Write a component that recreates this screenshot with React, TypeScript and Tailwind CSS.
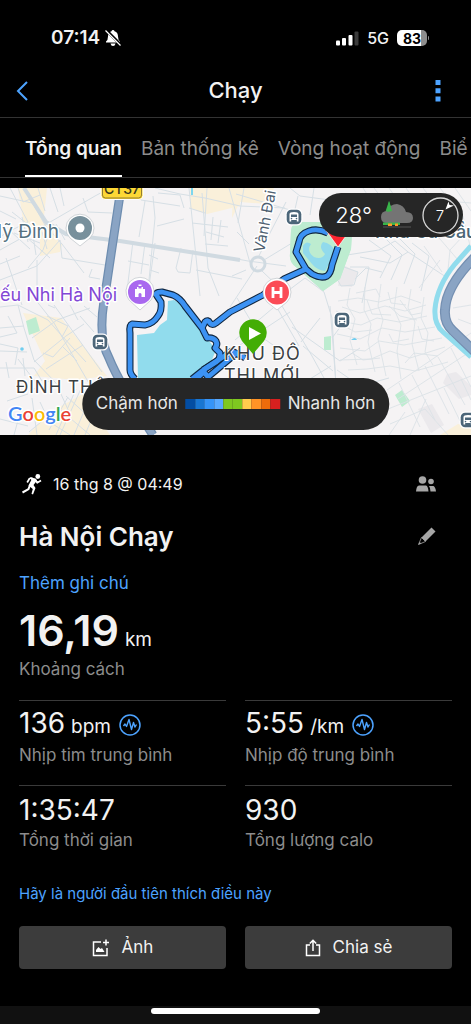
import { clsx } from "clsx";

const tabs = ["Tổng quan", "Bản thống kê", "Vòng hoạt động", "Biể"];

const stats = [
  { value: "136", unit: "bpm", label: "Nhịp tim trung bình", chart: true },
  { value: "5:55", unit: "/km", label: "Nhịp độ trung bình", chart: true },
  { value: "1:35:47", unit: "", label: "Tổng thời gian", chart: false },
  { value: "930", unit: "", label: "Tổng lượng calo", chart: false },
];

const route = [
  "M192 191L202 183L216 174Q220 172 220 165L215 160Q218 157 216 153Q213 149 207 150L202 140L185 118Q180 110 173 107L162 104Q154 104 157 108L161 114Q162 123 158 128Q153 136 145 137L132 136Q129 137 130 145L130 182Q130 186 135 191",
  "M202 140L205 134Q208 131 210 135Q212 138 216 135L230 124L263 107L284 91L306 81",
  "M328 45Q318 40 309 43Q300 46 299 54L296 64L306 81L312 86Q321 91 327 88Q331 85 332 77L338 59",
  "M196 191L204 184L208 189L233 168L238 164M203 182L232 163L245 170",
];

const streets = [
  "M24 0L45 37L62 56L84 85M45 37L95 8L110 0M10 0L28 34L6 45L0 49M45 37L0 62M60 52L37 78L0 92M60 52L62 70L105 77M83 10L88 24L112 25M65 52L56 36M0 8L32 15M12 24L30 38M18 0L23 14L40 7M6 70L17 103L22 117",
  "M38 0L45 23M50 0L58 24M60 0L64 18M0 23L16 31M0 35L10 51M8 41L30 61M22 29L28 54M14 45L40 55M25 48L50 70M37 72L37 100M0 76L20 68M28 80L43 62L50 42M32 41L36 67M42 44L47 61",
  "M139 0L141 12L180 18M153 8L155 30L149 92M158 5L180 7L184 20M133 53L127 103M145 55L141 86M155 55L149 98M128 73L149 77M149 67L158 71M150 82L159 85M157 38L184 31M145 13L139 49M181 60L176 80L178 84L190 85L193 62M92 81L89 89L100 91",
  "M189 0L200 108M202 5L208 80L219 108M189 20L205 25M192 35L228 39M207 0L204 48M205 56L228 58M213 29L211 52M221 32L218 55M206 44L224 49M196 82L242 91M229 0L250 75M155 0L180 6L205 10L240 18L285 20",
  "M236 6L290 22M232 70L248 73L286 78M286 14L270 45L258 70M257 78L230 119M262 83L285 105L305 90L324 104L332 130L336 198M264 72L292 55M244 0L238 35M290 0L300 8L330 12M298 8L293 30M314 0L310 27M237 44L249 56M232 88L246 82",
  "M347 67L379 62L395 53L408 64L446 89M337 91L341 78L358 84L354 97L341 98ZM355 91L366 80L382 84M360 69L390 75L408 64M369 52L391 68L380 90M382 47L402 67L391 92M397 48L415 66L404 96M412 55L429 68L421 103M350 79L369 79L362 115",
  "M0 119L18 117L24 140L34 172L56 195L70 226M18 117L48 132L62 148L86 174M35 111L54 135L90 197M54 117L74 145L102 184M0 140L24 138M32 150L57 132L90 120M34 174L66 148L84 136M0 163L27 164M46 181L83 157M48 117L55 120",
  "M0 180L34 180L42 193M8 128L17 145L0 149M0 156L18 160L15 177M23 170L25 188M6 174L9 190M70 150L53 169L43 165M62 158L77 173M47 128L68 138L62 149M70 117L78 132M80 128L94 144M84 118L97 129M18 171L37 196M30 203L53 191",
  "M84 194L60 247M76 201L56 247M68 209L49 242M57 219L90 247M66 208L101 240M45 231L70 247M85 221L74 247M94 225L85 247M32 210L37 247M0 231L28 238M20 225L14 247M40 214L47 229L29 244M7 213L28 206",
  "M282 118L312 168L330 201M276 118L299 158M330 118L336 196M303 158L333 183M301 154L320 130M235 152L273 120M240 157L290 124M292 139L340 173L360 160M331 178L305 194M237 110L260 148L286 166M332 150L350 126M337 182L360 198L389 190",
];

const smallStreets = [
  "M338 113L358 110L379 114L401 108L421 115M342 119L360 125L385 118L405 123L426 117M340 133L361 137L377 130L399 134L427 128M337 146L360 151L382 140L405 144L435 139M340 160L365 163L379 153L404 157L442 150M340 172L371 171L390 163L410 170L445 159M348 182L367 181L390 178L415 183L448 174",
  "M350 100L347 117L355 131L350 152L357 177M365 99L364 122L371 136L368 154L375 184M381 96L378 118L383 132L378 151L386 188M397 99L394 121L401 137L397 163L401 191M411 101L408 120L415 134L412 156L419 183M424 109L421 130L428 145L425 164L433 177",
  "M356 105L376 101L380 109M367 112L372 126L391 127M388 104L391 115L406 117M400 112L411 127L421 125M346 139L355 144L372 142M389 146L393 154L409 151M418 138L422 151L434 153M352 165L363 172L380 170M405 175L414 165L438 168M347 128L336 123M389 118L400 128L417 132",
  "M387 202L471 145M398 211L471 163M388 221L471 188M399 195L420 239M412 187L435 232M425 178L449 226M438 169L465 217M451 160L471 199M405 224L389 247M426 211L410 247M444 200L460 233L471 229M461 191L471 212M390 236L425 221L448 247",
  "M363 0L374 17M374 0L387 17M389 0L401 17M406 0L418 17M423 0L436 17M440 0L453 17M455 0L471 23M371 7L471 15M463 28L471 62M463 48L450 62L448 82M434 44L458 72M424 58L442 84M440 72L419 100M453 120L471 117M458 131L471 136",
];

const busStops = [
  [294, 29],
  [342, 132],
  [100, 154],
  [468, 232],
];

const paceColors = [
  "bg-[#034da2]",
  "bg-[#1976d2]",
  "bg-[#3694f7]",
  "bg-[#58a9ff]",
  "bg-[#7ec820]",
  "bg-[#7ec820]",
  "bg-[#ffcc4d]",
  "bg-[#ff9326]",
  "bg-[#ed6c0b]",
  "bg-[#d7201f]",
];

function StatusBar() {
  return (
    <div className="flex h-16 items-center justify-between pr-[42px] pl-[51px] pt-3">
      <div className="flex items-center gap-1 text-[19px] font-semibold">
        <span>07:14</span>
        <svg viewBox="0 0 18 18" className="size-[18px]" fill="white">
          <path d="M9 1Q10.200 1 10.500 2.200Q14 3.300 14 7.500Q14 11 16 12.500V13.500H2V12.500Q4 11 4 7.500Q4 3.300 7.500 2.200Q7.800 1 9 1Z" />
          <path d="M6.500 14.500H11.500Q11 17 9 17Q7 17 6.500 14.500Z" />
          <path d="M2 1L17 16" stroke="black" strokeWidth="3" />
          <path d="M1.500 1.500L16.500 16.500" stroke="white" strokeWidth="1.200" />
        </svg>
      </div>
      <div className="flex items-center gap-2">
        <svg viewBox="0 0 23 15" className="h-[15px] w-[23px]" fill="white">
          <rect y="9.500" width="4" height="5" rx="1" />
          <rect x="6" y="7" width="4" height="7.500" rx="1" />
          <rect x="12.500" y="4" width="4" height="10.500" rx="1" />
          <rect x="18.500" y="0.500" width="4" height="14" rx="1" fill="#3b3b3b" />
        </svg>
        <span className="text-base font-medium">5G</span>
        <div className="flex items-center gap-px">
          <span className="flex h-4 w-[30px] items-center justify-center rounded-[5px] bg-linear-to-r from-white from-80% to-[#8e8e8e] to-80% text-[14px] font-bold text-black">
            83
          </span>
          <span className="h-1 w-px rounded-r bg-[#8e8e8e]" />
        </div>
      </div>
    </div>
  );
}

function Header() {
  return (
    <header className="grid h-[54px] grid-cols-3 items-center border-b border-[#333] px-4">
      <button aria-label="Quay lại" className="justify-self-start">
        <svg viewBox="0 0 12 20" className="h-5 w-3" fill="none" stroke="#4da3ff" strokeWidth="2">
          <path d="M11 1L2 10L11 19" />
        </svg>
      </button>
      <h1 className="text-center text-[22px] font-medium">Chạy</h1>
      <button aria-label="Thêm" className="mr-3.5 justify-self-end">
        <svg viewBox="0 0 6 22" className="h-[22px] w-1.5" fill="#4da3ff">
          <path d="M.5 0h5v5h-5zM.5 8.300h5v5h-5zM.5 16.500h5v5h-5z" />
        </svg>
      </button>
    </header>
  );
}

function Tabs() {
  return (
    <nav className="flex h-[60px] gap-[19px] overflow-hidden border-b border-[#333] pl-[25px] text-[19px] whitespace-nowrap">
      {tabs.map((tab, i) => (
        <button
          key={tab}
          className={clsx(
            "shrink-0 border-b-2 pt-1.5",
            i === 0 ? "border-white font-semibold text-[#f2f2f2]" : "border-transparent text-[#8c8c8c]"
          )}
        >
          {tab}
        </button>
      ))}
    </nav>
  );
}

function BusStop({ x, y }: { x: number; y: number }) {
  return (
    <g transform={`translate(${x} ${y})`}>
      <rect x="-8.500" y="-8.500" width="17" height="17" rx="5.500" fill="#fff" />
      <rect x="-7.300" y="-7.300" width="14.600" height="14.600" rx="4.500" fill="#4c6679" />
      <path d="M-4.500 4.500V-3Q-4.500-5 0-5T4.500-3V4.500H2.800V3H-2.800V4.500Z" fill="#fff" />
      <path d="M-3-2.500H3V0H-3Z" fill="#4c6679" />
      <circle cx="-2.500" cy="1.600" r=".8" fill="#4c6679" />
      <circle cx="2.500" cy="1.600" r=".8" fill="#4c6679" />
    </g>
  );
}

function MapDrawing() {
  return (
    <svg
      viewBox="0 0 471 247"
      preserveAspectRatio="xMidYMid slice"
      className="block h-[247px] w-full bg-[#f5f3f4] font-['Inter',sans-serif]"
      fill="none"
    >
      <g fill="#faf0da">
        <path d="M18 0H47L44 28L60 56L52 60L24 38Z" />
        <path d="M190 0H240V18L207 26L190 20Z" />
        <path d="M233 0H274L267 16L240 14L232 30Z" />
        <path d="M23 125L61 130L107 188L76 192L34 188L45 173Z" />
        <path d="M28 247L50 224L83 206L110 247ZM440 247L458 236L471 239V247Z" />
        <path d="M40 45L62 56L60 64L40 68Z" />
      </g>
      <g fill="#ebe9ec">
        <path d="M341 76L358 84L352 99L338 98Z" />
        <path d="M447 186L456 184L471 198V207L459 211L443 195ZM418 221L432 216L444 237L431 245Z" />
      </g>
      <g fill="#bdecd0">
        <path d="M300 34L338 34L352 44L351 61L340 91L323 103L296 79Q289 74 290 66L291 43Q291 35 300 34Z" />
        <path d="M26 133L36 129L40 143L29 147Z" />
        <path d="M324 149L331 148V162H324ZM395 207L402 202L410 213L402 219Z" />
      </g>
      <g stroke="#d6dfe5" strokeWidth="1">
        {streets.map((d) => (
          <path key={d} d={d} />
        ))}
      </g>
      <g stroke="#dbe2e7" strokeWidth=".9">
        {smallStreets.map((d) => (
          <path key={d} d={d} />
        ))}
      </g>
      <g stroke="#d0dae1" strokeWidth="4">
        <path d="M24 0L46 34L66 46L95 50L120 53L240 72" />
        <circle cx="258" cy="76" r="7" strokeWidth="3" />
      </g>
      <path d="M192 0V7" stroke="#7cd6ee" strokeWidth="2" />
      <path d="M300 34L338 34L352 44L351 61L340 91L323 103L296 79Q289 74 290 66L291 43Q291 35 300 34Z" fill="#bdecd0" />
      <path d="M303 58Q306 52 311 56Q306 63 314 69Q322 72 325 66Q318 59 323 54Q331 55 336 64L325 83Q317 82 312 76L303 65Z" fill="#91daec" />
      <path d="M121 0L104 113Q98 150 109 170Q119 195 153 247" stroke="#6e8db0" strokeWidth="9" />
      <path d="M121 0L104 113Q98 150 109 170Q119 195 153 247" stroke="#8aa4c4" strokeWidth="6.500" />
      <path d="M471 58L455 76Q437 98 435 121Q434 136 443 144L471 169" stroke="#91dced" strokeWidth="5" />
      <path d="M475 69Q446 98 445 122Q444 135 453 143L475 164" stroke="#748fb1" strokeWidth="10" />
      <path d="M475 69Q446 98 445 122Q444 135 453 143L475 164" stroke="#8aa4c4" strokeWidth="7.500" />
      <path d="M168 113L174 112L181 116L216 162L211 174L187 192H138L137 147L154 145L160 137L167 132Z" fill="#91dced" />
      <circle cx="22" cy="161" r="1.800" fill="#6fcdf0" />
      <path d="M351 152q4-4 6 0z" fill="#6fcdf0" />

      <g fill="#3b4043" stroke="#fff" strokeWidth="3" paintOrder="stroke" strokeLinejoin="round">
        <text x="59" y="50" fontSize="19" fill="#54717f" textAnchor="end">Mỹ Đình</text>
        <text x="0" y="113" fontSize="18" fill="#8247d5">ếu Nhi Hà Nội</text>
        <text x="375" y="50" fontSize="18" fill="#4b6574" fontWeight="500">Nhà Cá Cầu</text>
        <text x="16" y="205" fontSize="17" letterSpacing="1">ĐÌNH THÔN</text>
        <text transform="translate(264 65) rotate(-79)" fontSize="15" fill="#4e6070">Vành Đai</text>
      </g>
      <g strokeLinejoin="round">
        {route.map((d) => (
          <path key={d} d={d} stroke="#10263f" strokeWidth="7" />
        ))}
        {route.map((d) => (
          <path key={d} d={d} stroke="#3c92f3" strokeWidth="4.800" />
        ))}
      </g>
      <g fill="#3b4043" stroke="#fff" strokeWidth="2" paintOrder="stroke" fontSize="18" letterSpacing="1">
        <text x="224" y="172">KHU ĐÔ</text>
        <text x="224" y="194">THỊ MỚI</text>
      </g>

      <rect x="101" y="-12" width="42" height="23.500" rx="4" fill="#fdd835" stroke="#fff" />
      <rect x="102.500" y="-10" width="39" height="20" rx="3" stroke="#907d33" />
      <text x="122" y="6" fontSize="14" fontWeight="500" fill="#39391f" textAnchor="middle">CT37</text>
      {busStops.map(([x, y]) => (
        <BusStop key={x} x={x} y={y} />
      ))}

      <path d="M80 58L70 50A14 14 0 1 1 90 50Z" fill="#fff" stroke="#b3bac0" strokeWidth=".6" />
      <circle cx="80" cy="40" r="12" fill="#78909c" />
      <circle cx="80" cy="40" r="4.500" fill="#fff" />

      <path d="M140 122L129 112A14 14 0 1 1 151 112Z" fill="#fff" stroke="#b3bac0" strokeWidth=".6" />
      <circle cx="140" cy="104" r="12" fill="#a968ef" />
      <path d="M135 101h2v-2h1.500v1.500h3V99h1.500v2h2v8h-10zM138.500 98v-1.500h3V98z" fill="#fff" />
      <path d="M138.500 109v-3q1.500-2 3 0v3z" fill="#a968ef" />

      <path d="M277 122L267 114A14 14 0 1 1 287 114Z" fill="#fff" stroke="#b3bac0" strokeWidth=".6" />
      <circle cx="277" cy="104.500" r="12" fill="#fb4b56" />
      <path d="M273 99V110M281 99V110M273 104.500H281" stroke="#fff" strokeWidth="2.800" />

      <path d="M253 166L242 153A13.700 13.700 0 1 1 264 153Z" fill="#43ad05" />
      <path d="M249 139L261 145.500L249 152Z" fill="#fff" />
      <path d="M338 59L325 41H351Z" fill="#ff2530" stroke="#fff" strokeWidth=".7" />

      <g fontWeight="600" stroke="#fff" strokeWidth="3" paintOrder="stroke" strokeLinejoin="round">
        <text x="8" y="233" fontFamily="Lato, sans-serif" fontSize="20">
          <tspan fill="#4285f4">G</tspan>
          <tspan fill="#ea4335">o</tspan>
          <tspan fill="#fbbc05">o</tspan>
          <tspan fill="#4285f4">g</tspan>
          <tspan fill="#34a853">l</tspan>
          <tspan fill="#ea4335">e</tspan>
        </text>
      </g>
    </svg>
  );
}

function Weather() {
  return (
    <div className="absolute top-[5px] right-2 flex h-11 items-center gap-2 rounded-full bg-[#262626] pr-1 pl-4 text-white">
      <span className="text-[22px] font-light">28°</span>
      <svg viewBox="0 0 34 30" className="h-[30px] w-[34px]">
        <path d="M9 1L13 13H5Z" fill="#39b54a" />
        <path d="M7 23Q1 23 1 17Q1 11 7 11Q10 4 17 4Q24 5 26 12Q33 12 33 18Q33 23 27 23Z" fill="#747474" />
        <path d="M9 1L12 11L7 12Z" fill="#39b54a" />
        <path d="M3 22.500H20V25H3Z" fill="#39b54a" />
        <path d="M8 23.500H12V26H8ZM15 23.500H18V26H15Z" fill="#ff9c27" />
        <path d="M3 27H31" stroke="#555" />
      </svg>
      <svg viewBox="0 0 37 37" className="h-[37px] w-[37px]">
        <circle cx="18.500" cy="18.500" r="17.500" fill="none" stroke="#d8d8d8" strokeWidth="1.300" />
        <path d="M23.500 12.500L26.500 4.500L27.500 8L32 8.500Z" fill="white" />
        <text x="18" y="24" textAnchor="middle" fontSize="15" fontWeight="300" fill="white">7</text>
      </svg>
    </div>
  );
}

function PaceLegend() {
  return (
    <div className="absolute bottom-[5px] left-1/2 flex h-[52px] -translate-x-1/2 items-center gap-2 rounded-full bg-[#262626] px-3.5 text-[17px] whitespace-nowrap text-[#e6e6e6]">
      <span>Chậm hơn</span>
      <div className="flex w-[94px]">
        {paceColors.map((color, i) => (
          <span key={i} className={clsx("h-2.5 flex-1", color)} />
        ))}
      </div>
      <span>Nhanh hơn</span>
    </div>
  );
}

function PulseIcon() {
  return (
    <svg viewBox="0 0 22 22" className="size-[22px]" fill="none" stroke="#4da3ff">
      <circle cx="11" cy="11" r="10" strokeWidth="1.500" />
      <path d="M4.500 12L6 10L7.500 12.500L10 5.500L12.500 15.500L14.500 8.500L16 13L17.500 10.500" strokeWidth="1.400" strokeLinejoin="round" />
    </svg>
  );
}

function RunnerIcon() {
  return (
    <svg viewBox="0 0 20 21" className="h-[21px] w-5" fill="none" stroke="white" strokeLinejoin="round">
      <circle cx="15.800" cy="2.500" r="2.400" fill="white" stroke="none" />
      <path d="M8 3.300L13.500 4.500L15 6.500L11.500 11L13.500 14L11 20.500L9.500 19.800L10.800 15L6.500 11.500L9.300 6Z" fill="white" stroke="none" />
      <path d="M10.500 4.200L7.500 4.500L5.200 8.500M13.500 6L15.200 8.800L19 6.500" strokeWidth="1.700" />
      <path d="M8 11L6.500 15.200L.5 18.500" strokeWidth="2" />
    </svg>
  );
}

export default function App() {
  return (
    <div className="flex min-h-screen flex-col bg-black font-['Inter',sans-serif] text-[#f2f2f2]">
      <StatusBar />
      <Header />
      <Tabs />
      <div className="relative mt-2.5 overflow-hidden">
        <MapDrawing />
        <Weather />
        <PaceLegend />
      </div>

      <main className="px-[19px] pt-[37px] pb-8">
        <div className="flex h-6 items-center justify-between pr-4 pl-[3px]">
          <div className="flex items-center gap-[11px]">
            <RunnerIcon />
            <span className="text-base">16 thg 8 @ 04:49</span>
          </div>
          <button aria-label="Người tham gia">
            <svg viewBox="0 0 20 16" className="h-4 w-5" fill="#a6a6a6">
              <circle cx="6.500" cy="4" r="3.800" />
              <circle cx="15" cy="5.500" r="2.800" />
              <path d="M0 15.500Q.5 9.500 3 9.500H10Q12 10 12.500 15.500ZM13 10H17.500Q19.500 11 20 15.500H14.500Q14.500 12 13 10Z" />
            </svg>
          </button>
        </div>

        <div className="mt-[22px] flex h-9 items-center justify-between pr-4">
          <h2 className="text-[26px] font-semibold">Hà Nội Chạy</h2>
          <button aria-label="Sửa tên">
            <svg viewBox="0 0 18 18" className="size-[18px]" fill="#a6a6a6">
              <path d="M13.500 .5L17.500 4.500L7.500 14.500L3.500 10.500Z" />
              <path d="M3.500 10.500L.5 17.500L7.500 14.500Z" fill="none" stroke="#a6a6a6" strokeWidth=".8" />
              <path d="M1.500 15L3.500 16.500L.5 17.500Z" />
            </svg>
          </button>
        </div>

        <a href="#note" className="mt-[17px] block h-6 text-[17px] leading-6 text-[#4da3ff]">
          Thêm ghi chú
        </a>

        <p className="mt-[9px] flex h-[52px] items-baseline gap-1.5 leading-[52px]">
          <span className="text-[43px] font-semibold">16,19</span>
          <span className="text-[19px]">km</span>
        </p>
        <p className="mt-px text-[17px] leading-6 text-[#8c8c8c]">Khoảng cách</p>

        <div className="mt-[19px] grid grid-cols-2 gap-x-[19px]">
          {stats.map((stat) => (
            <div key={stat.label} className="border-t border-[#3a3a3a] pt-1.5 pb-[18px]">
              <div className="flex h-9 items-center gap-2">
                <p className="flex items-baseline gap-1.5 leading-9">
                  <span className="text-[28px]">{stat.value}</span>
                  {stat.unit && <span className="text-[19px]">{stat.unit}</span>}
                </p>
                {stat.chart && <PulseIcon />}
              </div>
              <p className="text-[17px] leading-6 text-[#8c8c8c]">{stat.label}</p>
            </div>
          ))}
        </div>

        <a href="#like" className="mt-3 block text-[15px] leading-6 text-[#4da3ff]">
          Hãy là người đầu tiên thích điều này
        </a>

        <div className="mt-5 grid grid-cols-2 gap-[19px] text-[17px]">
          <button className="flex h-[43px] items-center justify-center gap-3 rounded bg-[#3c3c3c]">
            <svg viewBox="0 0 18 18" className="size-[18px]" fill="none" stroke="white" strokeWidth="1.500">
              <path d="M9 3H1.500V16.500H15V9M14 .5V6.500M11 3.500H17" />
              <path d="M4 13V11L6.500 8L8.500 10L10 9L12.500 13Z" fill="white" stroke="none" />
            </svg>
            Ảnh
          </button>
          <button className="flex h-[43px] items-center justify-center gap-3 rounded bg-[#3c3c3c]">
            <svg viewBox="0 0 16 18" className="h-[18px] w-4" fill="none" stroke="white" strokeWidth="1.500">
              <path d="M5 6H1.500V16.500H14.500V6H11M8 12V1.500M4.800 4.500L8 1.300L11.200 4.500" />
            </svg>
            Chia sẻ
          </button>
        </div>
      </main>

      <footer className="mt-auto flex h-[18px] justify-center bg-[#111] pt-0.5">
        <span className="h-1.5 w-[36%] rounded-full bg-white" />
      </footer>
    </div>
  );
}
